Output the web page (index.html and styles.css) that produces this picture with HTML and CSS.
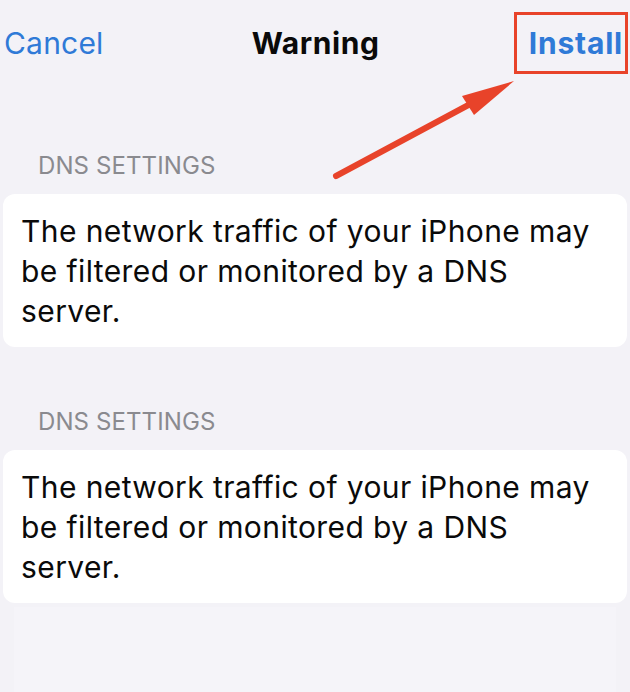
FILE: index.html
```html
<!DOCTYPE html>
<html lang="en">
<head>
<meta charset="utf-8">
<title>Warning</title>
<link rel="stylesheet" href="styles.css">
</head>
<body>
<div class="screen">
  <header class="nav">
    <span class="nav-btn cancel">Cancel</span>
    <span class="nav-title">Warning</span>
    <span class="nav-btn install">Install</span>
  </header>

  <section class="group first">
    <div class="group-label">DNS SETTINGS</div>
    <div class="card">The network traffic of your iPhone may be filtered or monitored by a DNS server.</div>
  </section>

  <section class="group">
    <div class="group-label">DNS SETTINGS</div>
    <div class="card">The network traffic of your iPhone may be filtered or monitored by a DNS server.</div>
  </section>

  <div class="ghost"></div>

  <svg class="arrow" width="630" height="200" viewBox="0 0 630 200" aria-hidden="true">
    <line x1="336" y1="176" x2="474" y2="102" stroke="#e8432a" stroke-width="6" stroke-linecap="round"/>
    <polygon points="514,81 462,96 474,115" fill="#e8432a"/>
  </svg>
</div>
</body>
</html>
```

FILE: styles.css
```css
* { box-sizing: border-box; }

html, body {
  margin: 0;
  padding: 0;
  background: #f3f2f7;
}

body {
  font-family: Inter, "Noto Sans", "Liberation Sans", sans-serif;
  -webkit-font-smoothing: antialiased;
}

.screen {
  position: relative;
  width: 630px;
  height: 692px;
  overflow: hidden;
}

.nav {
  height: 86px;
  display: flex;
  align-items: center;
  justify-content: space-between;
  padding: 0 2px 0 4px;
}

.nav-btn {
  font-size: 30px;
  color: #2f7ad7;
  letter-spacing: 0.2px;
}

.cancel {
  font-weight: 400;
}

.nav-title {
  font-size: 30px;
  font-weight: 700;
  color: #0a0a0a;
  letter-spacing: 0.6px;
  margin-left: 14px;
}

.install {
  font-weight: 700;
  letter-spacing: 0.8px;
  border: 3px solid #e8432a;
  padding: 12px 2px 12px 12px;
  line-height: 32px;
}

.group {
  padding-top: 62px;
}

.group.first {
  padding-top: 67px;
}

.group-label {
  font-size: 24px;
  line-height: 26px;
  color: #8a8a8f;
  padding-left: 38px;
  letter-spacing: 0.1px;
}

.card {
  margin: 15px 3px 0 3px;
  background: #ffffff;
  border-radius: 12px;
  padding: 17px 20px 16px 18px;
  font-size: 30px;
  line-height: 40px;
  letter-spacing: 0.4px;
  color: #0a0a0a;
}

.ghost {
  margin: 4px 14px 0 14px;
  height: 120px;
  background: #f5f4f9;
}

.arrow {
  position: absolute;
  left: 0;
  top: 0;
  pointer-events: none;
}
```
